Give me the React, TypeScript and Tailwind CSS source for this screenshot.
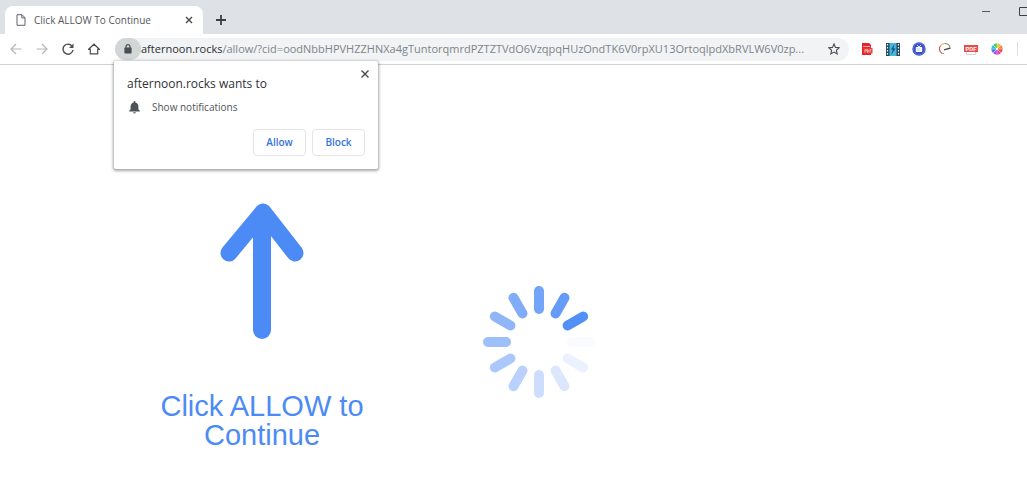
import React from "react";

const spokes = [
  { angle: 0, color: "#72a4f8" },
  { angle: 30, color: "#669cf7" },
  { angle: 60, color: "#528ff6" },
  { angle: 90, color: "#fafbff" },
  { angle: 120, color: "#ebf1fe" },
  { angle: 150, color: "#dce7fe" },
  { angle: 180, color: "#cdddfd" },
  { angle: 210, color: "#b9d1fc" },
  { angle: 240, color: "#aac8fb" },
  { angle: 270, color: "#9dc0fa" },
  { angle: 300, color: "#90b6f9" },
  { angle: 330, color: "#80acf8" },
];

const wheel = [
  "#f4c430",
  "#f28a2e",
  "#ee4b5a",
  "#e63fa8",
  "#a04fe0",
  "#4a7df0",
  "#2fc3d8",
  "#4fc95a",
];

const iconButton = "flex h-5 w-5 shrink-0 items-center justify-center";

const TabStrip: React.FC = () => (
  <header className="flex h-[34px] items-end bg-[#dee1e6] pl-[5px]">
    <div className="flex h-7 w-[198px] items-center rounded-t-lg bg-white pl-[11px] pr-[6px]">
      <svg width="10" height="12" viewBox="0 0 10 12" fill="none" stroke="#5f6368">
        <path d="M1 .7h5l3 3v7.600H1zM5.800.7v3.200H9" />
      </svg>
      <span className="ml-2 flex-1 whitespace-nowrap text-[10px] text-[#55585c]">
        Click ALLOW To Continue
      </span>
      <button type="button" aria-label="Close tab" className="flex h-4 w-4 items-center justify-center">
        <svg width="8" height="8" viewBox="0 0 8 8" stroke="#46494d" strokeWidth="1.400">
          <path d="M1 1l6 6M7 1L1 7" />
        </svg>
      </button>
    </div>
    <button type="button" aria-label="New tab" className="ml-2 flex h-7 w-5 items-center justify-center">
      <svg width="10" height="10" viewBox="0 0 10 10" stroke="#3c4043" strokeWidth="1.800">
        <path d="M5 0v10M0 5h10" />
      </svg>
    </button>
    <div className="ml-auto flex items-center gap-7 self-start overflow-hidden pt-[6px]">
      <button type="button" aria-label="Minimize" className="flex h-3 w-[10px] items-center">
        <svg width="10" height="10" viewBox="0 0 10 10" stroke="#55585c">
          <path d="M1 4.500h8" />
        </svg>
      </button>
      <button type="button" aria-label="Maximize" className="h-3 w-2">
        <svg width="8" height="12" viewBox="0 0 8 12" fill="none" stroke="#3c4043">
          <path d="M.5 1.500h8v8h-8z" />
        </svg>
      </button>
    </div>
  </header>
);

const Extensions: React.FC = () => (
  <div className="flex items-center gap-[6px]">
    <button type="button" aria-label="PDF converter" className={iconButton}>
      <svg width="12" height="14" viewBox="0 0 12 14">
        <path d="M1 1h7l2 2v10H1z" fill="#e2242b" />
        <path d="M2 4.500h7" stroke="#f7a5a5" />
        <rect x="2.500" y="6" width="9" height="5.500" fill="#ef3a3a" />
        <path d="M4 10.500V7.500h1.300v1.500H4M6.500 7.500v3h.5q1.200-1.500 0-3zM9 10.500v-3h1.500M9 9h1.200" fill="none" stroke="#fff" strokeWidth=".5" />
      </svg>
    </button>
    <button type="button" aria-label="Video downloader" className={iconButton}>
      <svg width="14" height="13" viewBox="0 0 14 13">
        <rect width="14" height="13" fill="#20485f" />
        <path d="M3.500 0h7v13h-7z" fill="#48b5dc" />
        <path d="M8.500 1L5 6.500h2L5 12l4.500-6.500H7.300z" fill="#174c78" />
        <path d="M1.500 1v12M12.500 1v12" stroke="#fff" strokeWidth="1.200" strokeDasharray="1.500 1.500" />
      </svg>
    </button>
    <button type="button" aria-label="TV" className={iconButton}>
      <svg width="14" height="14" viewBox="0 0 14 14">
        <circle cx="7" cy="7" r="6.700" fill="#3650c8" />
        <circle cx="7" cy="7" r="5.700" fill="none" stroke="#7385dc" strokeWidth=".6" />
        <path d="M5 3l2 2 2-2" fill="none" stroke="#fff" strokeWidth=".8" />
        <rect x="3.800" y="5" width="6.400" height="5" rx=".8" fill="#fff" />
        <rect x="4.800" y="6" width="3.400" height="3" fill="#dbe2fb" />
      </svg>
    </button>
    <button type="button" aria-label="Speed test" className={iconButton}>
      <svg width="14" height="14" viewBox="0 0 14 14" fill="none">
        <path d="M4 11.500A5.500 5.500 0 0 1 2.300 4" stroke="#d95b4d" strokeWidth="1.200" />
        <path d="M2.300 4A5.500 5.500 0 0 1 7 1.500" stroke="#d9a45c" strokeWidth="1.200" />
        <path d="M7 1.500A5.500 5.500 0 0 1 12 5" stroke="#6e9b63" strokeWidth="1.200" />
        <path d="M6 7.800L12.500 6" stroke="#4a4a4a" strokeWidth="1.300" />
        <path d="M4 11.500h2" stroke="#e08a7b" />
      </svg>
    </button>
    <button type="button" aria-label="PDF viewer" className={iconButton}>
      <svg width="14" height="14" viewBox="0 0 14 14">
        <path d="M2.500 10v2.500h9V10" fill="#fff" stroke="#d5d5d5" />
        <rect x="0" y="3" width="14" height="7" fill="#ea4b46" />
        <text x="7" y="8.600" textAnchor="middle" fontSize="5.500" fontWeight="700" fontFamily="Liberation Sans" fill="#fff">
          PDF
        </text>
      </svg>
    </button>
    <button type="button" aria-label="Color picker" className={iconButton}>
      <svg width="12" height="12" viewBox="-6 -6 12 12">
        {wheel.map((color, i) => (
          <path key={color} d="M0 0V-5.700A5.700 5.700 0 0 1 4.030-4.030Z" fill={color} transform={`rotate(${i * 45})`} />
        ))}
        <path d="M0-5.500v11M-5.500 0h11M-4-4l8 8M4-4l-8 8" stroke="#fff" strokeWidth=".4" />
        <circle r="1" fill="#fff" />
      </svg>
    </button>
  </div>
);

const Toolbar: React.FC = () => (
  <nav className="flex h-[31px] items-center border-b border-[#cfd1d3] bg-white pl-[6px] pr-[9px]">
    <div className="flex gap-[6px]">
      <button type="button" aria-label="Back" className={iconButton}>
        <svg width="12" height="12" viewBox="0 0 12 12" fill="none" stroke="#b4b7ba" strokeWidth="1.200">
          <path d="M11.500 6H1M6 1L1 6l5 5" />
        </svg>
      </button>
      <button type="button" aria-label="Forward" className={iconButton}>
        <svg width="12" height="12" viewBox="0 0 12 12" fill="none" stroke="#b4b7ba" strokeWidth="1.200">
          <path d="M.5 6H11M6 1l5 5-5 5" />
        </svg>
      </button>
      <button type="button" aria-label="Reload" className={iconButton}>
        <svg width="12" height="12" viewBox="0 0 12 12" fill="none" stroke="#4a4d51" strokeWidth="1.400">
          <path d="M10.300 3.500A5 5 0 1 0 11 7" />
          <path d="M11.500 .5V5H7z" fill="#4a4d51" stroke="none" />
        </svg>
      </button>
      <button type="button" aria-label="Home" className={iconButton}>
        <svg width="12" height="12" viewBox="0 0 12 12" fill="none" stroke="#4a4d51" strokeWidth="1.200">
          <path d="M.6 6.300L6 1.200l5.400 5.100H9.700v4.500H2.300V6.300z" />
        </svg>
      </button>
    </div>
    <div className="ml-[11px] flex h-[23px] min-w-0 flex-1 items-center rounded-full bg-[#f1f3f4] pr-[5px]">
      <button
        type="button"
        aria-label="Site information"
        className="flex h-[22px] w-[26px] items-center justify-center rounded-full bg-[#d3d6d6]"
      >
        <svg width="8" height="10" viewBox="0 0 8 10">
          <path d="M2 4V2.700a2 2 0 0 1 4 0V4" fill="none" stroke="#4a4d51" strokeWidth="1.200" />
          <rect x=".4" y="3.600" width="7.200" height="6" rx=".8" fill="#4a4d51" />
        </svg>
      </button>
      <label htmlFor="address" className="text-[11px] text-[#2b2e31]">
        afternoon.rocks
      </label>
      <input
        id="address"
        type="text"
        readOnly
        value="/allow/?cid=oodNbbHPVHZZHNXa4gTuntorqmrdPZTZTVdO6VzqpqHUzOndTK6V0rpXU13OrtoqlpdXbRVLW6V0zp..."
        className="min-w-0 flex-1 bg-transparent text-[11px] text-[#80848a] outline-none"
      />
      <button type="button" aria-label="Bookmark this page" className={iconButton}>
        <svg width="12" height="12" viewBox="0 0 12 12" fill="none" stroke="#4a4d51" strokeWidth="1.100">
          <path d="M6 1l1.500 3.400 3.700.4-2.800 2.500.8 3.600L6 9.100l-3.200 1.800.8-3.600L.8 4.800l3.700-.4z" />
        </svg>
      </button>
    </div>
    <div className="ml-2 flex items-center gap-[10px]">
      <Extensions />
      <div className="h-[14px] w-px bg-[#dadce0]" />
    </div>
  </nav>
);

const PermissionBubble: React.FC = () => (
  <section
    role="dialog"
    aria-labelledby="bubble-title"
    className="absolute left-[114px] top-[61px] w-[264px] rounded-xs bg-white px-[13px] pb-[13px] pt-[13px] shadow-[0_1px_3px_1px_rgba(0,0,0,0.35)]"
  >
    <button type="button" aria-label="Close" className="absolute right-2 top-2 flex h-[10px] w-[10px] items-center justify-center">
      <svg width="8" height="8" viewBox="0 0 8 8" stroke="#46494d" strokeWidth="1.400">
        <path d="M.5 .5l7 7M7.500 .5l-7 7" />
      </svg>
    </button>
    <h1 id="bubble-title" className="text-[12px] leading-5 text-[#303236]">
      afternoon.rocks wants to
    </h1>
    <div className="mt-1 flex h-[18px] items-center gap-3 pl-[2px]">
      <svg width="11" height="13" viewBox="0 0 11 13" fill="#4f5357">
        <path d="M5.500 0a.9.9 0 0 0-.9.900v.5C2.700 1.800 1.600 3.400 1.600 5.300v3L.2 9.800v.7h10.600v-.7L9.400 8.300v-3c0-1.900-1.100-3.500-3-3.900V.9A.9.9 0 0 0 5.500 0zM4.200 11.200a1.300 1.300 0 0 0 2.600 0z" />
      </svg>
      <span className="text-[10px] text-[#4f5357]">Show notifications</span>
    </div>
    <div className="mt-[13px] flex justify-end gap-[6px]">
      <button type="button" className="h-[27px] w-[53px] rounded border border-[#e3e5e8] text-[10px] font-semibold text-[#3574e2]">
        Allow
      </button>
      <button type="button" className="h-[27px] w-[53px] rounded border border-[#e3e5e8] text-[10px] font-semibold text-[#3574e2]">
        Block
      </button>
    </div>
  </section>
);

const App: React.FC = () => {
  return (
    <div className="relative min-h-screen overflow-hidden bg-white font-['Open_Sans','Noto_Sans',sans-serif]">
      <TabStrip />
      <Toolbar />
      <PermissionBubble />

      <main className="flex items-start pl-[150px] pt-[137px]">
        <div className="flex w-56 flex-col items-center">
          <svg width="84" height="138" viewBox="0 0 84 138" fill="none" stroke="#4c8bf5" strokeLinecap="round" strokeLinejoin="round">
            <path d="M42 18V128" strokeWidth="18" />
            <path d="M9 51L43 10l32 41" strokeWidth="17" />
            <path d="M43 10L30 30h25z" fill="#4c8bf5" strokeWidth="8" />
          </svg>
          <p className="mt-[52px] text-center font-['Liberation_Sans',sans-serif] text-[29px] leading-[29px] text-[#4c8bf5]">
            Click ALLOW to Continue
          </p>
        </div>
        <svg className="ml-[109px] mt-[83px]" width="112" height="114" viewBox="-56 -57 112 114">
          {spokes.map((spoke) => (
            <rect
              key={spoke.angle}
              x="-5"
              y="-56"
              width="10"
              height="28"
              rx="5"
              fill={spoke.color}
              transform={`rotate(${spoke.angle})`}
            />
          ))}
        </svg>
      </main>
    </div>
  );
};

export default App;
